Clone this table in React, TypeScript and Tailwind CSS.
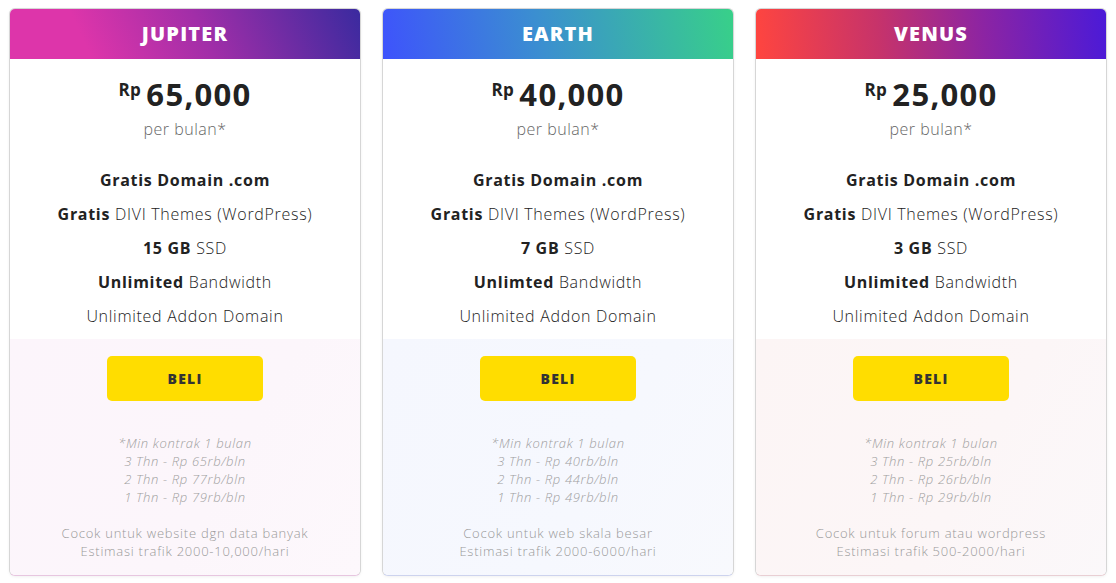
import React from 'react'

// Paket hosting: tiga kartu harga
type Plan = {
  name: string
  price: string
  header: string
  tint: string
  corner: string
  storage: string
  bandwidthLabel: string
  terms: string[]
  note: string[]
}

const plans: Plan[] = [
  {
    name: 'JUPITER',
    price: '65,000',
    header: 'bg-[linear-gradient(65deg,#dd35aa_22%,#a12ea8_55%,#3a2a9f_100%)]',
    tint: 'bg-[linear-gradient(120deg,#fcf5fb_0%,#fcf6fb_60%,#fdf8fc_100%)]',
    corner: 'border-b-[#e7c6e0]',
    storage: '15 GB',
    bandwidthLabel: 'Unlimited',
    terms: ['3 Thn - Rp 65rb/bln', '2 Thn - Rp 77rb/bln', '1 Thn - Rp 79rb/bln'],
    note: ['Cocok untuk website dgn data banyak', 'Estimasi trafik 2000-10,000/hari'],
  },
  {
    name: 'EARTH',
    price: '40,000',
    header: 'bg-[linear-gradient(80deg,#3e53fc_0%,#3b8fd0_45%,#38d089_100%)]',
    tint: 'bg-[linear-gradient(120deg,#f5f7fe_0%,#f6f8fe_60%,#f8f9fd_100%)]',
    corner: 'border-b-[#cdd3ee]',
    storage: '7 GB',
    bandwidthLabel: 'Unlimted',
    terms: ['3 Thn - Rp 40rb/bln', '2 Thn - Rp 44rb/bln', '1 Thn - Rp 49rb/bln'],
    note: ['Cocok untuk web skala besar', 'Estimasi trafik 2000-6000/hari'],
  },
  {
    name: 'VENUS',
    price: '25,000',
    header: 'bg-[linear-gradient(85deg,#ff453f_0%,#c7336a_35%,#8c24a3_65%,#4b1ad8_100%)]',
    tint: 'bg-[linear-gradient(120deg,#fcf5f5_0%,#fcf6f7_60%,#fbf8fa_100%)]',
    corner: 'border-b-[#e9cfd4]',
    storage: '3 GB',
    bandwidthLabel: 'Unlimited',
    terms: ['3 Thn - Rp 25rb/bln', '2 Thn - Rp 26rb/bln', '1 Thn - Rp 29rb/bln'],
    note: ['Cocok untuk forum atau wordpress', 'Estimasi trafik 500-2000/hari'],
  },
]

function PlanCard({ plan }: { plan: Plan }) {
  return (
    <div
      className={`flex flex-col overflow-hidden rounded-[6px] border border-[#d6d6d6] ${plan.corner} bg-white shadow-[0_1px_3px_rgba(0,0,0,0.06)]`}
    >
      {/* Header */}
      <div className={`flex h-[50px] items-center justify-center ${plan.header}`}>
        <span className="text-[20px] font-extrabold tracking-[1.2px] text-white">{plan.name}</span>
      </div>

      {/* Price + features */}
      <div className="flex flex-col items-center pt-[20px] pb-[6px]">
        <div className="flex items-start leading-none text-[#222]">
          <span className="mt-[2px] mr-[5px] text-[17px] font-bold tracking-[0.5px]">Rp</span>
          <span className="text-[31px] font-bold tracking-[1.3px]">{plan.price}</span>
        </div>
        <div className="mt-[8px] text-[16px] font-light leading-[22px] tracking-[0.5px] text-[#666]">per bulan*</div>

        <ul className="mt-[23px] flex flex-col items-center text-[16px] leading-[34px] tracking-[0.7px] text-[#222]">
          <li className="font-bold">Gratis Domain .com</li>
          <li>
            <span className="font-bold">Gratis</span> <span className="font-light">DIVI Themes (WordPress)</span>
          </li>
          <li>
            <span className="font-bold">{plan.storage}</span> <span className="font-light">SSD</span>
          </li>
          <li>
            <span className="font-bold">{plan.bandwidthLabel}</span> <span className="font-light">Bandwidth</span>
          </li>
          <li className="font-light">Unlimited Addon Domain</li>
        </ul>
      </div>

      {/* Bottom */}
      <div className={`flex flex-1 flex-col items-center pt-[17px] pb-[15px] ${plan.tint}`}>
        <button className="flex h-[45px] w-[156px] items-center justify-center rounded-[5px] bg-[#ffdd00] text-[14px] font-extrabold tracking-[1.2px] text-[#333]">
          BELI
        </button>
        <div className="mt-[33px] flex flex-col items-center text-[13px] font-light italic leading-[18px] tracking-[0.65px] text-[#9e9e9e]">
          <span>*Min kontrak 1 bulan</span>
          {plan.terms.map((t) => (
            <span key={t}>{t}</span>
          ))}
        </div>
        <div className="mt-[18px] flex flex-col items-center text-[13px] font-light leading-[18px] tracking-[0.75px] text-[#999]">
          {plan.note.map((n) => (
            <span key={n}>{n}</span>
          ))}
        </div>
      </div>
    </div>
  )
}

export default function App() {
  return (
    <div className="min-h-screen bg-white font-['Open_Sans',sans-serif]">
      <div className="grid grid-cols-3 gap-[21px] px-[9px] pt-[8px]">
        {plans.map((p) => (
          <PlanCard key={p.name} plan={p} />
        ))}
      </div>
    </div>
  )
}
